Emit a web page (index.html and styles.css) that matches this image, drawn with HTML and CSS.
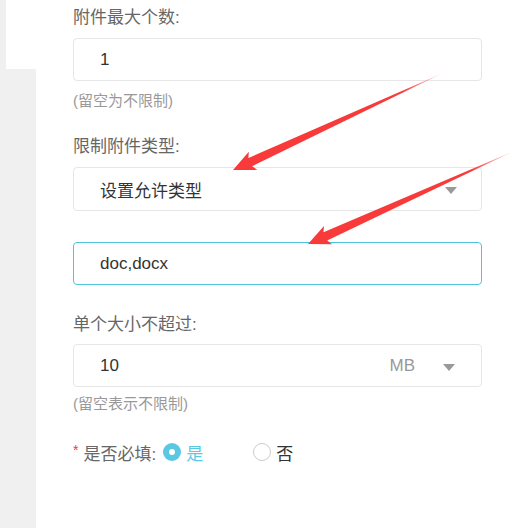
FILE: index.html
```html
<!DOCTYPE html>
<html lang="zh-CN">
<head>
<meta charset="utf-8">
<link rel="stylesheet" href="styles.css">
</head>
<body>
<div class="page">
  <aside class="side"><div class="side-top"></div></aside>
  <main class="form">
    <div class="label l1">附件最大个数:</div>
    <div class="box b1"><span class="val">1</span></div>
    <div class="hint h1">(留空为不限制)</div>
    <div class="label l2">限制附件类型:</div>
    <div class="box b2 select"><span class="val">设置允许类型</span><span class="caret"></span></div>
    <div class="box b3 focus"><span class="val">doc,docx</span></div>
    <div class="label l3">单个大小不超过:</div>
    <div class="box b4 split"><span class="val">10</span><span class="unit">MB</span><span class="caret"></span></div>
    <div class="hint h2">(留空表示不限制)</div>
    <div class="radio-row">
      <span class="req">*</span>
      <span class="rlabel">是否必填:</span>
      <span class="radio on"></span><span class="opt on">是</span>
      <span class="radio off"></span><span class="opt">否</span>
    </div>
  </main>
  <svg class="arrows" width="530" height="528" viewBox="0 0 530 528">
    <defs>
      <linearGradient id="g1" gradientUnits="userSpaceOnUse" x1="0" y1="0" x2="45" y2="0">
        <stop offset="0" stop-color="#f83a3a" stop-opacity="0.15"/>
        <stop offset="1" stop-color="#f83a3a" stop-opacity="1"/>
      </linearGradient>
    </defs>
    <polygon transform="translate(443 73) rotate(155.2)" fill="url(#g1)"
      points="0,0 212.3,-4.5 209.3,-10 231.3,0 209.3,10 212.3,4.5"/>
    <polygon transform="translate(512 152) rotate(155.7)" fill="url(#g1)"
      points="0,0 204.8,-4.5 201.8,-10 223.8,0 201.8,10 204.8,4.5"/>
  </svg>
</div>
</body>
</html>
```
FILE: styles.css
```css
* { box-sizing: border-box; }
html, body { margin: 0; padding: 0; background: #fff; }
body {
  font-family: "Liberation Sans", "Noto Sans CJK SC", sans-serif;
  color: #333;
}
.page {
  position: relative;
  display: flex;
  width: 530px;
  height: 528px;
  overflow: hidden;
}
.side {
  width: 36px;
  flex-shrink: 0;
  background: #f0f0f0;
}
.side-top {
  margin-left: 6px;
  height: 69px;
  background: #fff;
}
.form {
  padding-left: 37px;
  width: 446px;
  display: flex;
  flex-direction: column;
}
.label {
  font-size: 17px;
  line-height: 20px;
  color: #666;
}
.l1 { margin-top: 8px; }
.l2 { margin-top: 26px; }
.l3 { margin-top: 30px; }
.box {
  height: 43px;
  border: 1px solid #e6e6e6;
  border-radius: 4px;
  display: flex;
  align-items: center;
  padding: 0 24px 0 26px;
  font-size: 17px;
  color: #333;
  background: #fff;
}
.b1 { margin-top: 10px; }
.b2 { margin-top: 10px; height: 44px; }
.b3 { margin-top: 31px; }
.b4 { margin-top: 9px; padding-right: 26px; }
.focus { border-color: #4fc4e0; }
.caret {
  margin-left: auto;
  width: 0;
  height: 0;
  border-left: 6px solid transparent;
  border-right: 6px solid transparent;
  border-top: 7px solid #999;
  margin-top: 3px;
}
.unit {
  margin-left: auto;
  color: #999;
  margin-right: 28px;
}
.split .caret { margin-left: 0; }
.hint {
  font-size: 15px;
  line-height: 20px;
  color: #999;
}
.h1 { margin-top: 10px; }
.h2 { margin-top: 7px; }
.radio-row {
  margin-top: 28px;
  display: flex;
  align-items: center;
  height: 20px;
  font-size: 17px;
}
.req {
  color: #f33;
  font-size: 14px;
  margin-right: 5px;
  position: relative;
  top: -2px;
}
.rlabel { color: #666; margin-right: 7px; }
.radio {
  width: 18px;
  height: 18px;
  border-radius: 50%;
  flex-shrink: 0;
}
.radio.on {
  background: #5bc8e3;
  position: relative;
}
.radio.on::after {
  content: "";
  position: absolute;
  left: 6px;
  top: 6px;
  width: 6px;
  height: 6px;
  border-radius: 50%;
  background: #fff;
}
.radio.off {
  border: 1px solid #ccc;
  background: #fff;
  margin-left: 50px;
}
.opt { margin-left: 5px; color: #333; }
.opt.on { color: #5bc8e3; }
.arrows {
  position: absolute;
  left: 0;
  top: 0;
  pointer-events: none;
}
```
